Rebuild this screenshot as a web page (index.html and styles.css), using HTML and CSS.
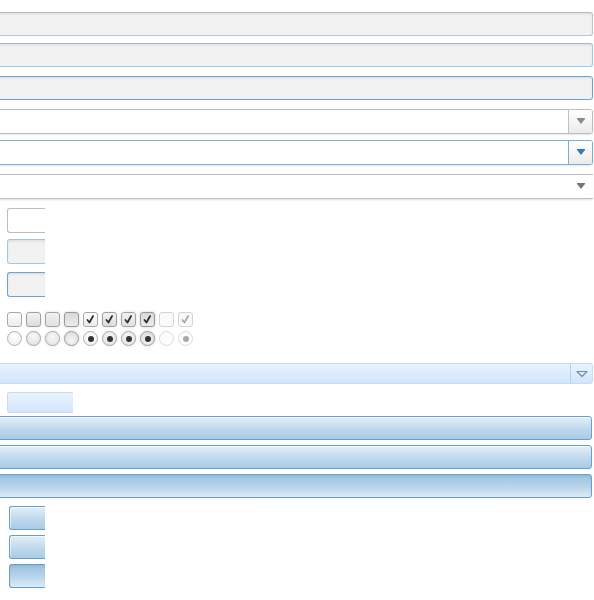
FILE: index.html
```html
<!DOCTYPE html>
<html>
<head>
<meta charset="utf-8">
<link rel="stylesheet" href="styles.css">
</head>
<body>
<div class="page">
  <div class="field text r1"></div>
  <div class="field text hover r2"></div>
  <div class="field text focus r3"></div>
  <div class="field select r4"><div class="grow"></div><div class="sbtn"><span class="tri"></span></div></div>
  <div class="field select focus r5"><div class="grow"></div><div class="sbtn"><span class="tri"></span></div></div>
  <div class="field flat r6"><div class="grow"></div><div class="fbtn"><span class="tri"></span></div></div>

  <div class="small white s1"></div>
  <div class="small grey hover s2"></div>
  <div class="small grey focus s3"></div>

  <div class="checks">
    <span class="cb"></span>
    <span class="cb hov"></span>
    <span class="cb hov2"></span>
    <span class="cb act"></span>
    <span class="cb on"><svg viewBox="0 0 15 15"><path d="M4 8 L6.3 11 L10.5 3.5" /></svg></span>
    <span class="cb on hov"><svg viewBox="0 0 15 15"><path d="M4 8 L6.3 11 L10.5 3.5" /></svg></span>
    <span class="cb on hov2"><svg viewBox="0 0 15 15"><path d="M4 8 L6.3 11 L10.5 3.5" /></svg></span>
    <span class="cb on act"><svg viewBox="0 0 15 15"><path d="M4 8 L6.3 11 L10.5 3.5" /></svg></span>
    <span class="cb dis"></span>
    <span class="cb dis on"><svg viewBox="0 0 15 15"><path d="M4 8 L6.3 11 L10.5 3.5" /></svg></span>
  </div>
  <div class="radios">
    <span class="rd"></span>
    <span class="rd hov"></span>
    <span class="rd hov2"></span>
    <span class="rd act"></span>
    <span class="rd on"><i></i></span>
    <span class="rd on hov"><i></i></span>
    <span class="rd on hov2"><i></i></span>
    <span class="rd on act"><i></i></span>
    <span class="rd dis"></span>
    <span class="rd dis on"><i></i></span>
  </div>

  <div class="combo"><div class="grow"></div><div class="cbtn"><svg viewBox="0 0 12 8"><path d="M1 1.5 H11 L6 6.5 Z"/></svg></div></div>
  <div class="chip"></div>
  <div class="bar b1"></div>
  <div class="bar b2"></div>
  <div class="bar act b3"></div>
  <div class="btn t1"></div>
  <div class="btn t2"></div>
  <div class="btn act t3"></div>
</div>
</body>
</html>
```
FILE: styles.css
```css
html, body { margin: 0; padding: 0; background: #fff; overflow: hidden; }
body { font-family: "Liberation Sans", Arial, sans-serif; width: 594px; height: 600px; }
.page { display: flex; flex-direction: column; align-items: flex-start; padding-top: 12px; }

.field {
  box-sizing: border-box;
  margin-left: -10px;
  width: 603px;
  height: 24px;
  border: 1px solid #c0c3c8;
  border-radius: 3px;
  display: flex;
}
.text {
  background: #f2f2f2;
  box-shadow: inset 0 2px 3px -1px rgba(0,0,0,0.10);
  border-top-color: #b5b8be;
}
.text.hover { border-color: #9ccbea; border-top-color: #9fb8c9; }
.text.focus { border-color: #6aa4d4; }
.r2 { margin-top: 7px; }
.r3 { margin-top: 9px; }
.r4 { margin-top: 9px; }
.r5 { margin-top: 6px; }
.r6 { margin-top: 9px; }

.select { background: #fff; height: 25px; border-color: #bdbdbd; box-shadow: 0 1px 2px rgba(0,0,0,0.10); }
.select.focus { border-color: #78afdb; }
.grow { flex: 1; }
.sbtn {
  width: 23px;
  border-left: 1px solid #c0c0c0;
  background: linear-gradient(#ffffff, #ebebeb);
  border-radius: 0 2px 2px 0;
  display: flex; align-items: center; justify-content: center;
}
.focus .sbtn { border-left-color: #78afdb; }
.tri {
  width: 0; height: 0;
  border-left: 4px solid transparent;
  border-right: 4px solid transparent;
  border-top: 5px solid #8a8a8a;
  position: relative;
}
.tri::before {
  content: ""; position: absolute; left: -4px; top: -6px; width: 8px; height: 1px; background: #8a8a8a;
}
.focus .tri { border-top-color: #2f7fc0; }
.focus .tri::before { background: #2f7fc0; }

.flat {
  border: none;
  border-top: 1px solid #bdbdbd;
  border-bottom: 1px solid #bdbdbd;
  border-radius: 0;
  height: 25px;
  box-shadow: 0 2px 2px -1px rgba(0,0,0,0.12);
}
.fbtn { width: 24px; display: flex; align-items: center; justify-content: center; }
.fbtn .tri { border-top-color: #777; }
.fbtn .tri::before { background: #777; }

.small {
  box-sizing: border-box;
  width: 38px;
  height: 25px;
  margin-left: 7px;
  border: 1px solid #bdbdbd;
  border-right: none;
  border-radius: 3px 0 0 3px;
}
.small.white { margin-top: 9px; background: #fff; }
.small.grey { background: #f2f2f2; box-shadow: inset 0 2px 3px -1px rgba(0,0,0,0.10); }
.small.hover { margin-top: 6px; border-color: #9ccbea; border-top-color: #a8c2d3; }
.small.focus { margin-top: 8px; border-color: #6aa4d4; }

.checks, .radios { display: flex; gap: 4px; margin-left: 7px; }
.checks { margin-top: 15px; }
.radios { margin-top: 4px; }

.cb {
  box-sizing: border-box;
  width: 15px; height: 15px;
  border: 1px solid #a8a8a8;
  border-radius: 3px;
  background: linear-gradient(#fdfdfd, #ececec);
  display: inline-flex;
}
.cb.hov { background: linear-gradient(#f4f4f4, #dcdcdc); border-color: #a0a0a0; box-shadow: 0 0 2px rgba(0,0,0,0.12); }
.cb.hov2 { background: linear-gradient(#f1f1f1, #e0e0e0); border-color: #a4a4a4; box-shadow: 0 0 3px rgba(0,0,0,0.15); }
.cb.act { background: linear-gradient(#d8d8d8, #ececec); border-color: #989898; box-shadow: 0 0 3px rgba(0,0,0,0.18); }
.cb.dis { border-color: #d4d4d4; background: #fafafa; }
.cb svg { width: 13px; height: 13px; }
.cb svg path { fill: none; stroke: #2b2b2b; stroke-width: 2; stroke-linecap: round; stroke-linejoin: round; }
.cb.dis svg path { stroke: #a8a8a8; }

.rd {
  box-sizing: border-box;
  width: 15px; height: 15px;
  border: 1px solid #b0b0b0;
  border-radius: 50%;
  background: radial-gradient(circle at 50% 35%, #ffffff, #ececec);
  display: inline-flex; align-items: center; justify-content: center;
}
.rd.hov { background: radial-gradient(circle at 50% 35%, #f8f8f8, #dedede); border-color: #a8a8a8; box-shadow: 0 0 2px rgba(0,0,0,0.12); }
.rd.hov2 { background: radial-gradient(circle at 50% 35%, #f6f6f6, #e2e2e2); border-color: #a8a8a8; box-shadow: 0 0 3px rgba(0,0,0,0.15); }
.rd.act { background: radial-gradient(circle at 50% 65%, #f6f6f6, #d8d8d8); border-color: #9c9c9c; box-shadow: 0 0 3px rgba(0,0,0,0.18); }
.rd.dis { border-color: #dadada; background: #fdfdfd; }
.rd i { width: 6px; height: 6px; border-radius: 50%; background: #333; }
.rd.dis i { background: #a8a8a8; }

.combo {
  box-sizing: border-box;
  margin-left: -10px;
  margin-top: 17px;
  width: 603px;
  height: 21px;
  border: 1px solid #c5dcee;
  border-radius: 3px;
  background: linear-gradient(#e9f3fd, #d1e5fb);
  display: flex;
}
.cbtn {
  width: 21px;
  border-left: 1px solid #b9cfe2;
  display: flex; align-items: center; justify-content: center;
}
.cbtn svg { width: 12px; height: 8px; }
.cbtn svg path { fill: none; stroke: #6a91b4; stroke-width: 1.2; stroke-linejoin: round; }

.chip {
  box-sizing: border-box;
  width: 66px; height: 21px;
  margin-left: 7px; margin-top: 8px;
  border: 1px solid #c6dbed;
  border-right: none;
  border-radius: 3px 0 0 3px;
  background: linear-gradient(#e9f3fd, #d1e5fb);
}

.bar {
  box-sizing: border-box;
  margin-left: -10px;
  width: 602px;
  height: 24px;
  border: 1px solid #6e9ec8;
  border-radius: 3px;
  background: linear-gradient(#e4eff8, #bcd7ec 60%, #a8cce6);
  box-shadow: inset 0 1px 0 rgba(255,255,255,0.6);
}
.b1 { margin-top: 3px; }
.b2 { margin-top: 5px; }
.b3 { margin-top: 5px; }
.bar.act, .btn.act { background: linear-gradient(#9dc3e0, #b5d3ea 50%, #dcebf6); box-shadow: inset 0 2px 2px rgba(0,0,0,0.06); }

.btn {
  box-sizing: border-box;
  width: 36px; height: 24px;
  margin-left: 9px;
  border: 1px solid #6e9ec8;
  border-right: none;
  border-radius: 3px 0 0 3px;
  background: linear-gradient(#e4eff8, #bcd7ec 60%, #a8cce6);
  box-shadow: inset 1px 1px 0 rgba(255,255,255,0.6);
}
.t1 { margin-top: 8px; }
.t2 { margin-top: 5px; }
.t3 { margin-top: 5px; }
```
